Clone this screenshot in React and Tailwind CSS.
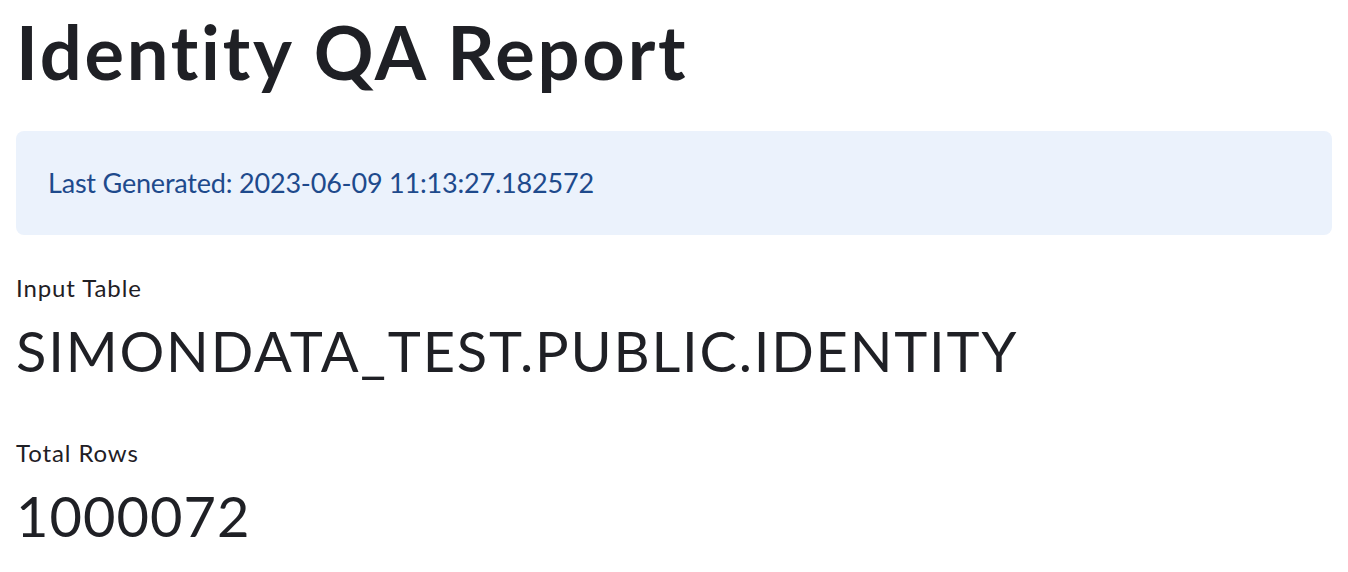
const Metric = ({ label, value, className = "", valueClass = "tracking-[1.8px]" }) => (
  <div className={className}>
    <p className="text-[24px] leading-[32px] tracking-[0.9px]">{label}</p>
    <p className={`mt-[11px] text-[56px] leading-[72px] ${valueClass}`}>{value}</p>
  </div>
);

export default function App() {
  return (
    <div
      className="min-h-screen bg-white px-4 pt-[4px] text-[#1f2025]"
      style={{ fontFamily: 'Lato, "Noto Sans", sans-serif' }}
    >
      <h1 className="text-[74px] font-bold leading-[96px] tracking-[2.8px]">
        Identity QA Report
      </h1>

      <div className="mt-[31px] flex h-[104px] items-center rounded-lg bg-[#ebf2fc] px-[32px]">
        <p className="text-[27px] leading-[36px] tracking-[-0.2px] text-[#1e4a8c]">
          Last Generated: 2023-06-09 11:13:27.182572
        </p>
      </div>

      <Metric
        className="mt-[37px]"
        label="Input Table"
        value="SIMONDATA_TEST.PUBLIC.IDENTITY"
      />
      <Metric
        className="mt-[50px]"
        label="Total Rows"
        value="1000072"
        valueClass="tracking-[1px]"
      />
    </div>
  );
}
